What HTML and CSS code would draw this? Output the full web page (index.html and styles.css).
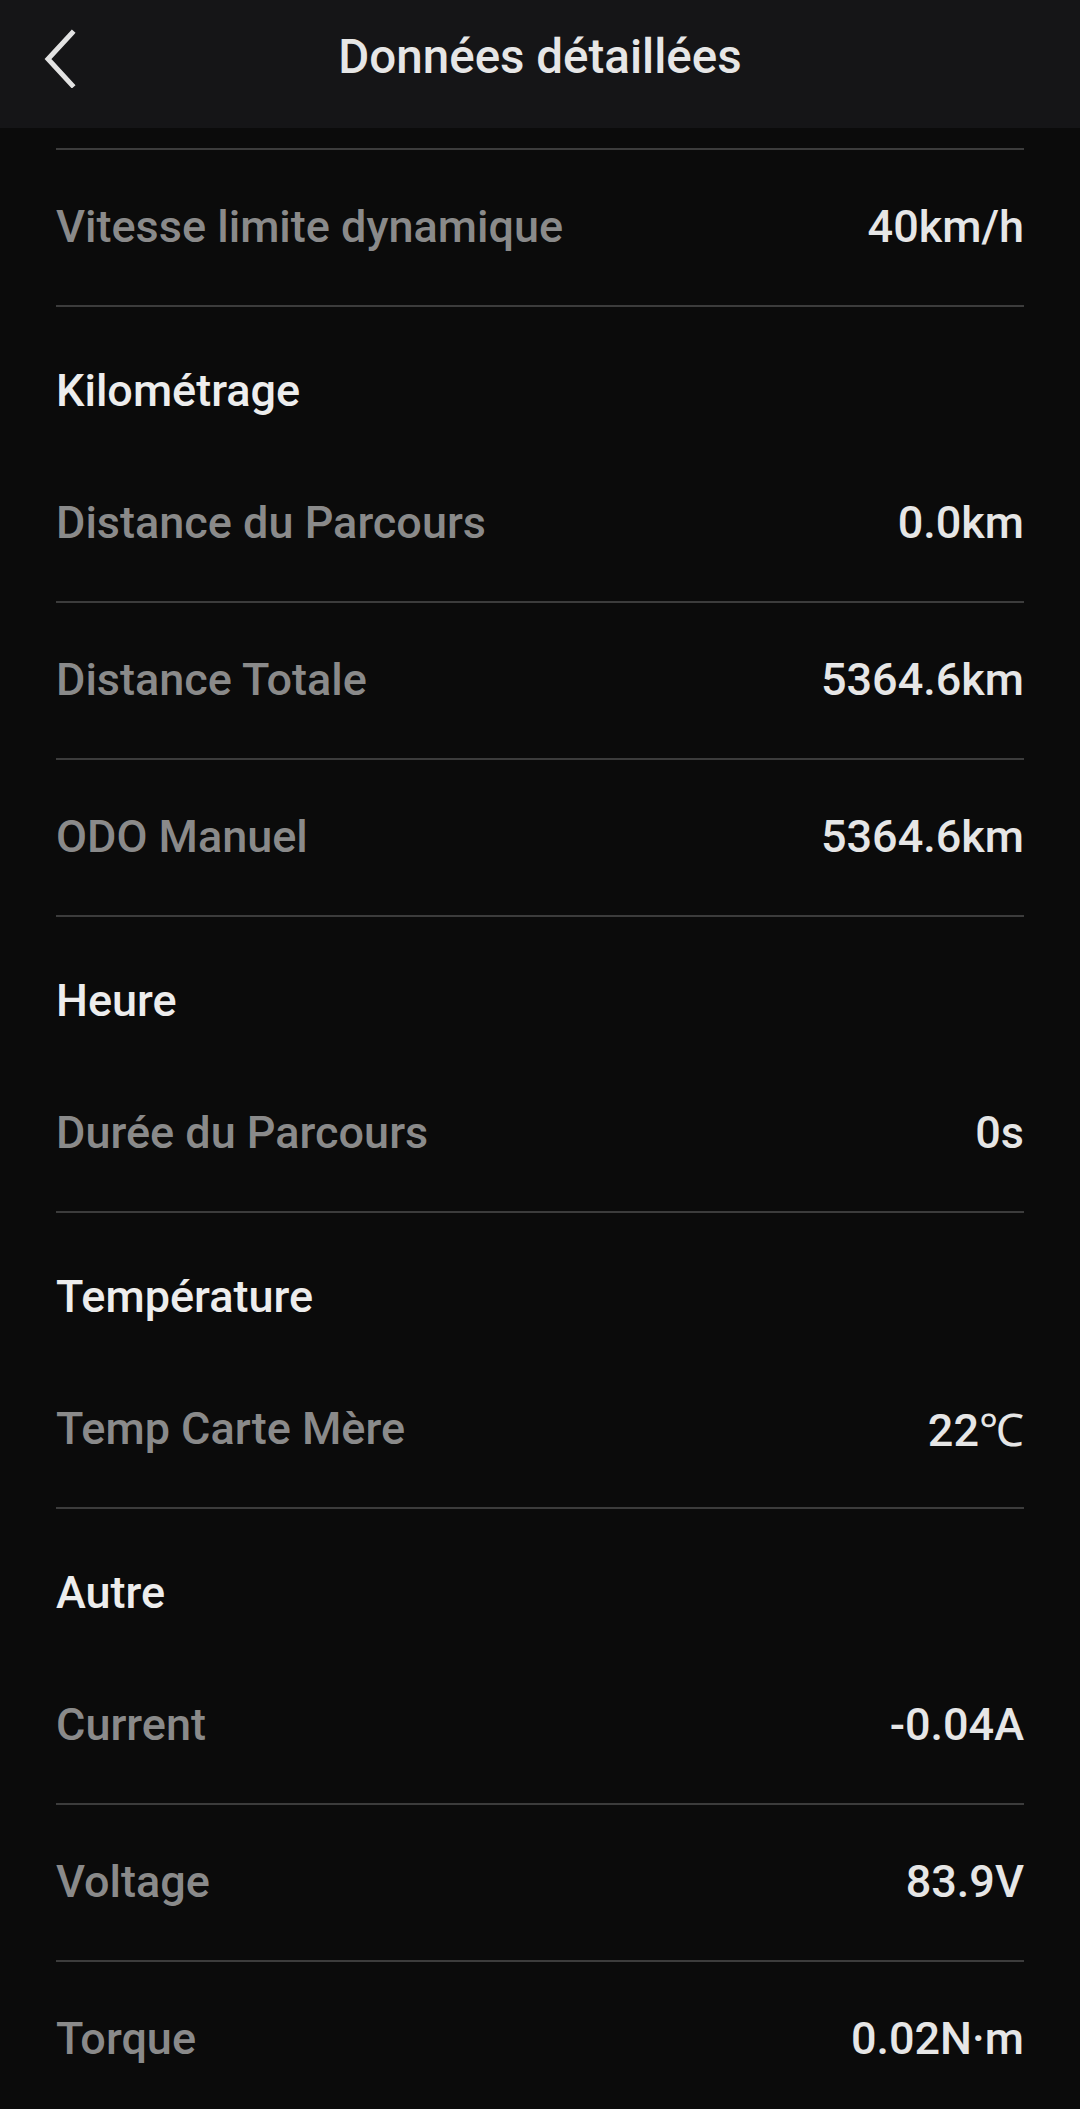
FILE: index.html
```html
<!DOCTYPE html>
<html lang="fr">
<head>
    <meta charset="UTF-8">
    <meta name="viewport" content="width=device-width, initial-scale=1.0">
    <title>Données détaillées</title>
    <link rel="stylesheet" href="styles.css">
</head>
<body>
    <!-- Top bar -->
    <header class="top-bar">
        <button class="back-btn" type="button" aria-label="Retour">
            <svg width="40" height="60" viewBox="0 0 40 60">
                <path d="M32 5 L8 31 L32 57" fill="none" stroke="#e2e2e2" stroke-width="5" stroke-linecap="square"/>
            </svg>
        </button>
        <h1 class="top-title">Données détaillées</h1>
    </header>

    <main class="content">
        <div class="divider"></div>

        <div class="row">
            <span class="label">Vitesse limite dynamique</span>
            <span class="value">40km/h</span>
        </div>

        <!-- Kilométrage -->
        <h2 class="section-title">Kilométrage</h2>
        <div class="row">
            <span class="label">Distance du Parcours</span>
            <span class="value">0.0km</span>
        </div>
        <div class="row">
            <span class="label">Distance Totale</span>
            <span class="value">5364.6km</span>
        </div>
        <div class="row">
            <span class="label">ODO Manuel</span>
            <span class="value">5364.6km</span>
        </div>

        <!-- Heure -->
        <h2 class="section-title">Heure</h2>
        <div class="row">
            <span class="label">Durée du Parcours</span>
            <span class="value">0s</span>
        </div>

        <!-- Température -->
        <h2 class="section-title">Température</h2>
        <div class="row">
            <span class="label">Temp Carte Mère</span>
            <span class="value">22℃</span>
        </div>

        <!-- Autre -->
        <h2 class="section-title">Autre</h2>
        <div class="row">
            <span class="label">Current</span>
            <span class="value">-0.04A</span>
        </div>
        <div class="row">
            <span class="label">Voltage</span>
            <span class="value">83.9V</span>
        </div>
        <div class="row">
            <span class="label">Torque</span>
            <span class="value">0.02N·m</span>
        </div>
    </main>
</body>
</html>
```

FILE: styles.css
```css
body {
    margin: 0;
    background-color: #0b0b0b;
    font-family: Roboto, "Liberation Sans", sans-serif;
    overflow: hidden;
}
.top-bar {
    height: 128px;
    background-color: #151517;
    display: flex;
    align-items: center;
    justify-content: center;
    position: relative;
}
.back-btn {
    position: absolute;
    left: 40px;
    top: 28px;
    width: 40px;
    height: 60px;
    padding: 0;
    border: none;
    background: none;
    display: flex;
}
.top-title {
    margin: 0 0 14px;
    color: #e6e6e6;
    font-size: 47.5px;
    font-weight: 500;
}
.content {
    padding: 20px 56px 0;
}
.divider {
    height: 2px;
    background-color: #3c3c3c;
}
.row {
    height: 155px;
    display: flex;
    align-items: center;
    justify-content: space-between;
    border-bottom: 2px solid #3c3c3c;
    font-size: 45px;
    font-weight: 500;
}
.label {
    color: #8a8a8a;
    padding-bottom: 2px;
}
.value {
    color: #e6e6e6;
    padding-bottom: 2px;
}
.section-title {
    margin: 0;
    height: 139px;
    box-sizing: border-box;
    padding-top: 57px;
    line-height: 54px;
    color: #ededed;
    font-size: 45px;
    font-weight: 500;
}
```
